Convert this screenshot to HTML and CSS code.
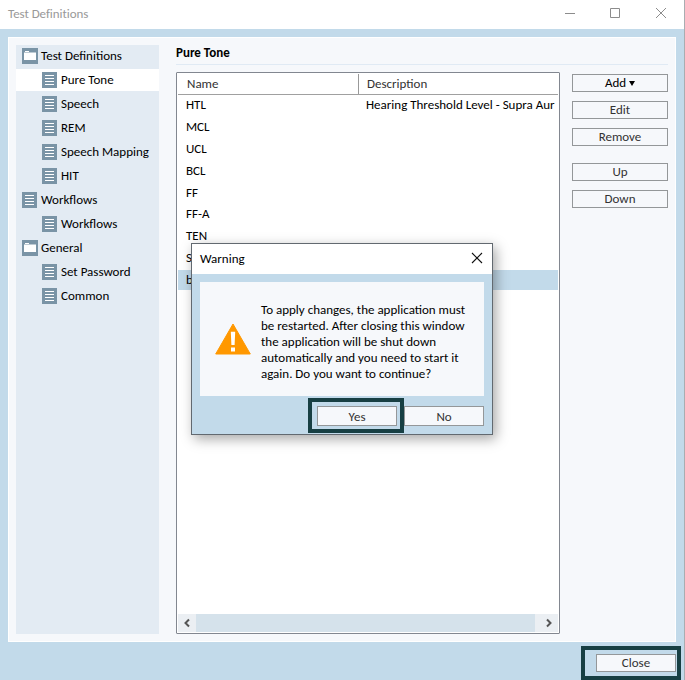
FILE: index.html
```
<!DOCTYPE html>
<html lang="en">
<head>
<meta charset="utf-8">
<title>Test Definitions</title>
<link rel="stylesheet" href="styles.css">
</head>
<body>
<svg width="0" height="0" class="defs" aria-hidden="true">
  <symbol id="doc" viewBox="0 0 15 16"><path fill="#7a94a6" d="M0 0h15v16H0z"/><path fill="#fff" d="M3 3h9v1H3zM3 6h9v1H3zM3 9h9v1H3zM3 12h9v1H3z"/></symbol>
  <symbol id="folder" viewBox="0 0 16 16"><path fill="#7a94a6" d="M0 0h16v16H0z"/><path fill="#fff" d="M3 3h4v1H3zM2 4.500h12V12H2z"/></symbol>
</svg>
<div class="window">
  <header class="titlebar">
    <span class="title">Test Definitions</span>
    <svg class="controls" width="104" height="14" viewBox="0 0 104 14" fill="none" stroke="#8c8c8c"><path d="M1 7.500h10M46.500 2.500h9v9h-9z"/><path d="M92 2l10 10M102 2l-10 10"/></svg>
  </header>
  <div class="panel">
    <nav class="tree">
      <div class="node"><svg class="folder"><use href="#folder"/></svg><span>Test Definitions</span></div>
      <div class="node child selected"><svg><use href="#doc"/></svg><span>Pure Tone</span></div>
      <div class="node child"><svg><use href="#doc"/></svg><span>Speech</span></div>
      <div class="node child"><svg><use href="#doc"/></svg><span>REM</span></div>
      <div class="node child"><svg><use href="#doc"/></svg><span>Speech Mapping</span></div>
      <div class="node child"><svg><use href="#doc"/></svg><span>HIT</span></div>
      <div class="node"><svg><use href="#doc"/></svg><span>Workflows</span></div>
      <div class="node child"><svg><use href="#doc"/></svg><span>Workflows</span></div>
      <div class="node"><svg class="folder"><use href="#folder"/></svg><span>General</span></div>
      <div class="node child"><svg><use href="#doc"/></svg><span>Set Password</span></div>
      <div class="node child"><svg><use href="#doc"/></svg><span>Common</span></div>
    </nav>
    <main class="main">
      <h1>Pure Tone</h1>
      <div class="content">
        <div class="table">
          <div class="thead"><span class="col">Name</span><span class="desc">Description</span></div>
          <div class="rows">
            <div class="row"><span class="col">HTL</span><span class="desc">Hearing Threshold Level - Supra Aur</span></div>
            <div class="row">MCL</div>
            <div class="row">UCL</div>
            <div class="row">BCL</div>
            <div class="row">FF</div>
            <div class="row">FF-A</div>
            <div class="row">TEN</div>
            <div class="row">S</div>
            <div class="row current">b</div>
          </div>
          <div class="scroll">
            <svg width="18" height="18" fill="none" stroke="#555" stroke-width="2"><path d="M11 5.500L7.500 9l3.500 3.500"/></svg>
            <div class="thumb"></div>
            <svg width="23" height="18" fill="none" stroke="#555" stroke-width="2"><path d="M12 5.500L15.500 9 12 12.500"/></svg>
          </div>
        </div>
        <div class="actions">
          <button class="strong">Add <svg width="6" height="5"><path d="M0 0h6L3 5z"/></svg></button>
          <button>Edit</button>
          <button>Remove</button>
          <button class="gap">Up</button>
          <button>Down</button>
        </div>
      </div>
    </main>
  </div>
  <footer class="footer"><div class="mark mark-close"><button>Close</button></div></footer>

  <section class="dialog">
    <header class="dialog-title"><span>Warning</span>
      <svg width="12" height="12" stroke="#111" stroke-width="1.100"><path d="M1 1l10 10M11 1L1 11"/></svg>
    </header>
    <div class="message">
      <svg width="36" height="32" viewBox="0 0 36 32"><path fill="#ff9800" stroke="#ff9800" stroke-linejoin="round" d="M18 1l17.300 30H.7z"/><path fill="#fff" d="M15.800 8.800h4.400l-.6 13.200h-3.200zM16 24.500h4v4h-4z"/></svg>
      <p>To apply changes, the application must<br>be restarted. After closing this window<br>the application will be shut down<br>automatically and you need to start it<br>again. Do you want to continue?</p>
    </div>
    <div class="choices"><div class="mark mark-yes"><button>Yes</button></div><button class="no">No</button></div>
  </section>
</div>
</body>
</html>
```
FILE: styles.css
```
* { box-sizing: border-box; }
body { margin: 0; font: 13px/16px Carlito, Lato, sans-serif; color: #000; }
.defs { position: absolute; }
.window { position: relative; width: 685px; height: 680px; overflow: hidden; background: #c2daea; border-right: 1px solid #a9adb1; }
.titlebar { display: flex; justify-content: space-between; height: 29px; padding: 6px 16px 0 8px; background: #fff; color: #999; }
.title { letter-spacing: -0.05px; font-variant-ligatures: common-ligatures; }
.panel { display: flex; margin: 8px 8px 0; width: 668px; height: 605px; padding: 7px; border: 1px solid #fff; background: #f6f8fb; }
.tree { width: 143px; height: 589px; background: #e3ebf3; }
.node { display: flex; align-items: center; gap: 4px; height: 22px; margin-bottom: 2px; padding-left: 6px; white-space: nowrap; }
.node svg { width: 15px; height: 16px; flex: none; }
.node .folder { width: 16px; }
.node .folder + span { margin-left: -1px; }
.child { padding-left: 26px; }
.selected { background: #fff; }
.main { width: 492px; margin-left: 17px; }
h1 { height: 20px; margin: 0 0 7px; border-bottom: 1px solid #e0eaf4; font-size: 13px; line-height: 16px; }
.content { display: flex; gap: 12px; }
.table { display: flex; flex-direction: column; width: 384px; height: 562px; padding: 1px; border: 1px solid #828790; border-radius: 1px; background: #fff; }
.thead { display: flex; height: 21px; padding-left: 9px; border-bottom: 1px solid #a0a0a0; color: #333; line-height: 20px; }
.thead .col { width: 172px; border-right: 1px solid #999; }
.thead .desc { padding-left: 8px; }
.rows { display: flex; flex-direction: column; gap: 1.900px; flex: 1; }
.row { display: flex; height: 20px; padding-left: 8px; line-height: 20px; white-space: nowrap; }
.row .col { width: 180px; }
.current { background: #c2daea; }
.scroll { display: flex; height: 18px; background: #ebeff3; }
.thumb { flex: 1; background: #d5e2eb; }
.actions { display: flex; flex-direction: column; gap: 9px; width: 96px; padding-top: 2px; }
button { display: block; width: 100%; height: 18px; margin: 0; padding: 0; border: 1px solid #949799; border-radius: 0; background: #f6f8fb; color: #333; font: inherit; line-height: 16px; text-align: center; }
.strong { color: #000; }
.strong svg { margin: 0 0 1px; }
.gap { margin-top: 8px; }
.footer { display: flex; justify-content: flex-end; padding: 4px 3px 0 0; }
.mark { border: 4px solid #173f43; background: #c2daea; }
.mark-close { width: 100px; height: 34px; padding: 4px 1px 0 11px; }
.dialog { position: absolute; left: 191px; top: 243px; width: 302px; height: 192px; border: 1px solid #626970; background: #c2daea; box-shadow: 3px 4px 12px rgba(0,0,0,.35); }
.dialog-title { display: flex; justify-content: space-between; height: 30px; padding: 8px 9px 0 8px; background: #fff; line-height: 14px; }
.message { display: flex; width: 284px; height: 114px; margin: 8px 8px 0; padding: 20px 0 0 15px; background: #f6f8fb; }
.message svg { margin-top: 21px; }
.message p { margin: 0 0 0 10px; white-space: nowrap; }
.choices { display: flex; padding: 2px 8px 0 116px; }
.mark-yes { width: 96px; height: 35px; padding: 4px 3px 0 5px; }
.choices button { height: 20px; padding-top: 2px; }
.choices .no { width: 80px; margin-top: 8px; }
```
